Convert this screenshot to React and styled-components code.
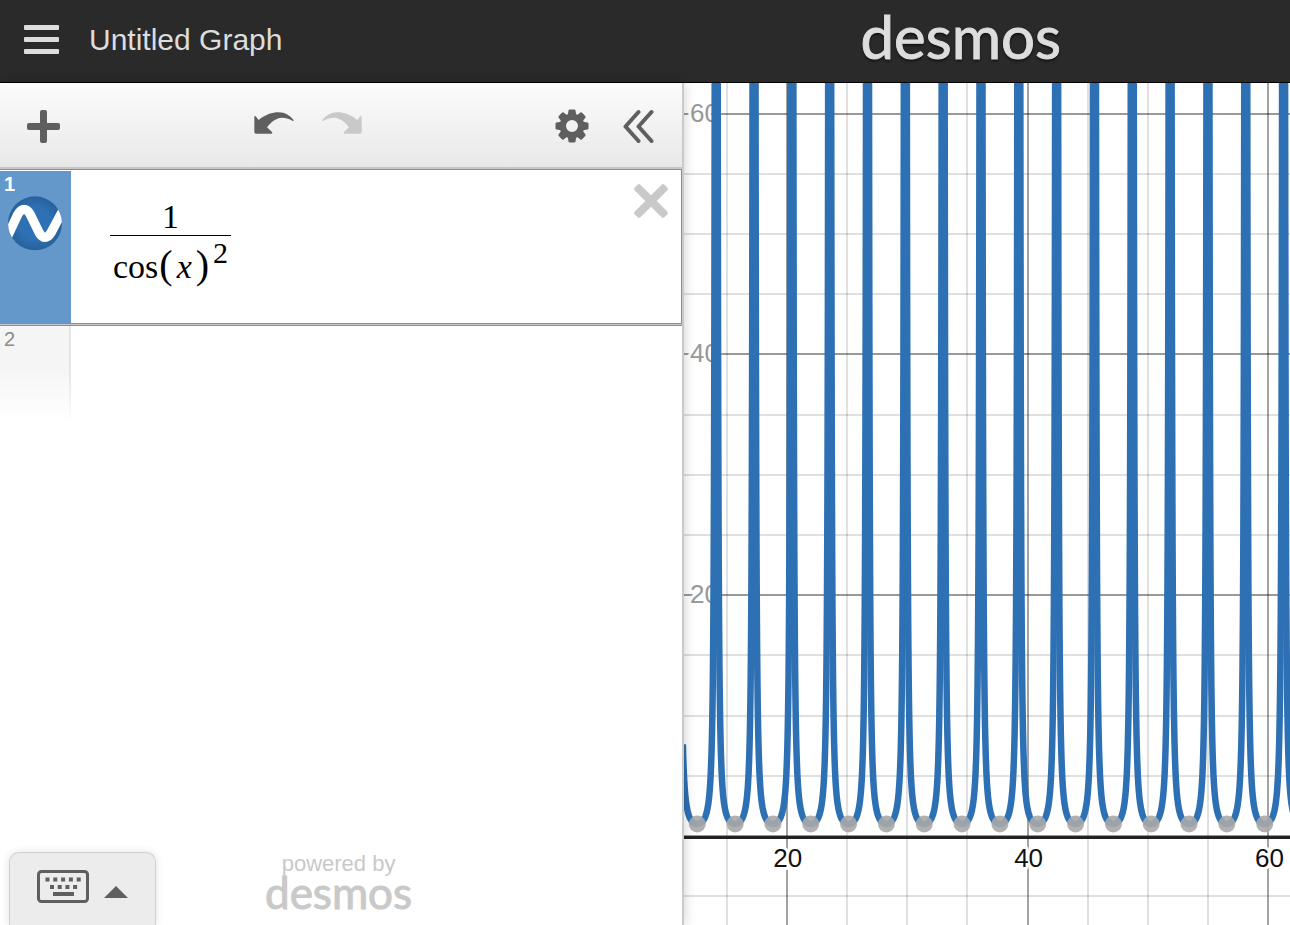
import styled, { createGlobalStyle, ThemeProvider } from "styled-components";

const theme = {
    colors: {
        header: "#2a2a2a",
        light: "#dddddd",
        icon: "#5f5f5f",
        muted: "#c9c9c9",
        selected: "#6498cb",
        curve: "#2d70b3"
    }
};

const GlobalStyle = createGlobalStyle`
    * {
        box-sizing: border-box;
    }

    body {
        margin: 0;
        background: #fff;
        font-family: "Liberation Sans", Arial, sans-serif;
    }
`;

const Page = styled.div`
    display: flex;
    flex-direction: column;
    height: 100vh;
    overflow: hidden;
`;

const Header = styled.header`
    display: flex;
    align-items: center;
    flex: none;
    height: 83px;
    padding: 0 229px 4px 24px;
    background: ${({ theme }) => theme.colors.header};
    border-bottom: 1px solid #000;
`;

const IconButton = styled.button`
    display: flex;
    align-items: center;
    justify-content: center;
    flex: none;
    padding: 0;
    border: 0;
    background: none;
    color: ${({ theme }) => theme.colors.icon};
    cursor: pointer;

    &:disabled {
        color: ${({ theme }) => theme.colors.muted};
        cursor: default;
    }
`;

const MenuButton = styled(IconButton)`
    flex-direction: column;
    gap: 7px;
    width: 35px;
`;

const MenuBar = styled.span`
    width: 100%;
    height: 5px;
    border-radius: 1px;
    background: ${({ theme }) => theme.colors.light};
`;

const Title = styled.h1`
    flex: 1;
    margin: 2px 0 0 30px;
    color: ${({ theme }) => theme.colors.light};
    font-size: 30px;
    font-weight: 400;
    line-height: 36px;
`;

const Logo = styled.span`
    margin-bottom: 6px;
    font-family: Lato, sans-serif;
    font-size: 60px;
    line-height: 72px;
    color: ${({ theme }) => theme.colors.light};
    -webkit-text-stroke: 1px ${({ theme }) => theme.colors.light};
    text-shadow: 0 2px 3px rgba(0, 0, 0, 0.7);
`;

const Workspace = styled.main`
    display: flex;
    flex: 1;
    min-height: 0;
`;

const Panel = styled.section`
    display: flex;
    flex-direction: column;
    flex: none;
    width: 684px;
    max-width: 60%;
    background: #fff;
    border-right: 2px solid #cacaca;
    box-shadow: 0 0 12px rgba(0, 0, 0, 0.2);
    z-index: 1;
`;

const Toolbar = styled.div`
    display: flex;
    align-items: center;
    justify-content: space-between;
    flex: none;
    height: 86px;
    padding: 2px 28px 0 27px;
    background: linear-gradient(#fcfcfc, #e8e8e8);
    border-bottom: 2px solid #c6c6c6;
`;

const ToolGroup = styled.div`
    display: flex;
    align-items: center;
    gap: ${({ $gap }) => $gap}px;
`;

const History = styled(ToolGroup)`
    margin-bottom: 6px;
`;

const List = styled.ol`
    flex: 1;
    margin: 0;
    padding: 0;
    list-style: none;
`;

const Expression = styled.li`
    display: flex;
    height: 155px;
    padding-top: 1px;
    border: 1px solid ${({ theme }) => theme.colors.selected};
    border-left: 0;
    box-shadow: 0 1px 0 #c6c6c6, 0 2px 0 ${({ theme }) => theme.colors.selected};
`;

const Tab = styled.div`
    display: flex;
    flex-direction: column;
    flex: none;
    width: 71px;
    padding: 2px 8px 0 4px;
    background: ${({ theme }) => theme.colors.selected};
    color: #fff;
    font-size: 20px;
    font-weight: 700;
    line-height: 23px;
`;

const EmptyTab = styled(Tab)`
    height: 96px;
    background: linear-gradient(#f5f5f5 40%, #fff);
    color: #8c8c8c;
    font-weight: 400;
    border-right: 2px solid;
    border-image: linear-gradient(#e6e6e6 50%, #fff) 1;
`;

const EmptyExpression = styled.li`
    display: flex;
    margin-top: 2px;
`;

const CurveButton = styled(IconButton)`
    width: 54px;
    margin-left: 4px;
`;

const Formula = styled.div`
    display: flex;
    flex: 1;
    align-items: flex-start;
    padding: 28px 0 0 39px;
    font-family: "Liberation Serif", serif;
    font-size: 34px;
    color: #000;
    outline: none;
`;

const Fraction = styled.div`
    display: flex;
    flex-direction: column;
    align-items: center;
`;

const Numerator = styled.div`
    width: 100%;
    text-align: center;
    line-height: 36px;
    border-bottom: 1px solid #000;
`;

const Denominator = styled.div`
    display: flex;
    align-items: baseline;
    padding: 0 3px;
    line-height: 58px;
`;

const Paren = styled.span`
    margin: 0 1px;
    font-size: 40px;
`;

const Variable = styled.i`
    padding: 0 3px;
`;

const Power = styled.sup`
    align-self: flex-start;
    margin-left: 3px;
    font-size: 30px;
    line-height: 34px;
`;

const DeleteButton = styled(IconButton)`
    align-self: flex-start;
    margin: 12px 12px 0 0;
    color: ${({ theme }) => theme.colors.muted};
`;

const PanelFooter = styled.footer`
    display: flex;
    flex: none;
    gap: 109px;
    padding-left: 9px;
`;

const KeypadButton = styled(IconButton)`
    gap: 15px;
    width: 147px;
    height: 73px;
    padding: 0 0 4px;
    background: #ececec;
    border: 1px solid #d0d0d0;
    border-bottom: 0;
    border-radius: 10px 10px 0 0;
    box-shadow: 0 0 8px rgba(0, 0, 0, 0.12);
`;

const Arrow = styled.span`
    margin-top: 9px;
    border: 12px solid transparent;
    border-top: 0;
    border-bottom: 12px solid ${({ theme }) => theme.colors.icon};
`;

const PoweredBy = styled.a`
    display: flex;
    flex-direction: column;
    align-items: center;
    color: ${({ theme }) => theme.colors.muted};
    font-size: 22px;
    line-height: 24px;
    text-decoration: none;
`;

const SmallLogo = styled.span`
    font-family: Lato, sans-serif;
    font-size: 44px;
    line-height: 32px;
    -webkit-text-stroke: 1px ${({ theme }) => theme.colors.muted};
`;

const GraphPane = styled.section`
    flex: 1;
    min-width: 0;
    overflow: hidden;
`;

const GraphSvg = styled.svg`
    display: block;
    width: 100%;
    height: 100%;
    font-size: 26px;
`;

const AxisLabel = styled.text`
    fill: ${({ $muted }) => ($muted ? "#999" : "#111")};
    stroke: #fff;
    stroke-width: 6px;
    stroke-linejoin: round;
    paint-order: stroke;
`;

const UNIT = 12.04;
const toX = (x) => -138 + x * UNIT;
const toY = (y) => 753 - y * UNIT;

const range = (from, to, step = 1) => {
    const values = [];
    for (let v = from; v <= to; v += step) values.push(v);
    return values;
};

// one branch of 1 / cos(x)^2 around x = k * pi
const branch = (k, from = -1.48) =>
    range(from, 1.48, 0.01)
        .map((t) => `${toX(k * Math.PI + t).toFixed(2)},${toY(1 / Math.cos(t) ** 2).toFixed(2)}`)
        .join(" ");

const Icon = ({ width, height, children, ...rest }) => (
    <svg width={width} height={height} viewBox={`0 0 ${width} ${height}`} aria-hidden="true" {...rest}>
        {children}
    </svg>
);

const ArrowIcon = ({ flip }) => (
    <svg width="40" height="22" viewBox="0 0 120 66" aria-hidden="true">
        <path
            transform={flip ? "translate(120 0) scale(-1 1)" : undefined}
            fill="currentColor"
            d="M5 13 L14 24 C34 8 54 1 74 1 C93 1 109 11 119 25 Q119 29 115 26 C104 19 94 17 84 17 C64 18 51 31 39 46 L54 60 Q57 65 51 65 L6 65 Q1 65 1 60 L1 15 Q1 10 5 13Z"
        />
    </svg>
);

const GearIcon = () => (
    <svg width="34" height="34" viewBox="-17 -17 34 34" aria-hidden="true">
        <circle r="9.2" fill="none" stroke="currentColor" strokeWidth="6.4" />
        {range(0, 315, 45).map((angle) => (
            <path
                key={angle}
                transform={`rotate(${angle})`}
                fill="currentColor"
                d="M-4.2 -11 L-3.5 -15.5 Q-3.2 -16.5 -2.2 -16.5 L2.2 -16.5 Q3.2 -16.5 3.5 -15.5 L4.2 -11Z"
            />
        ))}
    </svg>
);

const KeyboardIcon = () => (
    <Icon width={52} height={34}>
        <rect x="1.5" y="1.5" width="49" height="30" rx="3" fill="none" stroke="currentColor" strokeWidth="3" />
        {range(0, 4).map((i) => (
            <rect key={i} x={8.5 + i * 7.8} y="7.5" width="4" height="4" fill="currentColor" />
        ))}
        {range(0, 3).map((i) => (
            <rect key={i} x={13 + i * 7.7} y="15" width="4" height="4" fill="currentColor" />
        ))}
        <rect x="16" y="22" width="21" height="4" fill="currentColor" />
    </Icon>
);

const CurveIcon = () => (
    <svg width="54" height="55" viewBox="0 0 162 165" aria-hidden="true">
        <defs>
            <radialGradient id="disc">
                <stop offset="60%" stopColor="#2d70b3" />
                <stop offset="100%" stopColor="#27619b" />
            </radialGradient>
            <clipPath id="discClip">
                <circle cx="81" cy="82" r="81" />
            </clipPath>
        </defs>
        <circle cx="81" cy="82" r="81" fill="url(#disc)" />
        <path
            clipPath="url(#discClip)"
            d="M-8 135 L29 56 Q38 40 48 40 Q58 40 66 54 L94 111 Q102 124 111 124 Q121 124 129 110 L170 34"
            fill="none"
            stroke="#fff"
            strokeWidth="28"
        />
    </svg>
);

const CloseIcon = () => (
    <svg width="36" height="36" viewBox="-18 -18 36 36" aria-hidden="true">
        {[45, -45].map((angle) => (
            <rect
                key={angle}
                transform={`rotate(${angle})`}
                x="-21"
                y="-4"
                width="42"
                height="8"
                rx="2"
                fill="currentColor"
            />
        ))}
    </svg>
);

function Graph() {
    const gridX = range(-20, 300, 5);
    const gridY = range(-120, 60, 5);

    return (
        <GraphPane aria-label="Graph">
            <GraphSvg>
                {gridX.map((v) => (
                    <rect
                        key={v}
                        x={Math.round(toX(v)) - 1}
                        y="0"
                        width="2"
                        height="100%"
                        fillOpacity={v % 20 === 0 ? 0.36 : 0.12}
                    />
                ))}
                {gridY.map((v) => (
                    <rect
                        key={v}
                        x="0"
                        y={Math.round(toY(v)) - 1}
                        width="100%"
                        height="2"
                        fillOpacity={v % 20 === 0 ? 0.4 : 0.12}
                    />
                ))}
                <rect x="0" y="753" width="100%" height="3" fill="#222" />
                {[20, 40, 60].map((v) => (
                    <AxisLabel key={v} x={toX(v) + 1} y="784" textAnchor="middle">
                        {v}
                    </AxisLabel>
                ))}
                {[20, 40, 60].map((v) => (
                    <AxisLabel key={v} x="6" y={toY(v) + 8} $muted>
                        {v}
                    </AxisLabel>
                ))}
                <g fill="none" stroke={theme.colors.curve} strokeWidth="6.5" strokeLinejoin="round">
                    <polyline points={branch(4, -1.2)} />
                    {range(5, 80).map((k) => (
                        <polyline key={k} points={branch(k)} />
                    ))}
                </g>
                {range(4, 80).map((k) => (
                    <circle key={k} cx={toX(k * Math.PI)} cy={toY(1)} r="8.5" fill="#a8a8a8" fillOpacity="0.9" />
                ))}
            </GraphSvg>
        </GraphPane>
    );
}

export default function App() {
    return (
        <ThemeProvider theme={theme}>
            <GlobalStyle />
            <Page>
                <Header>
                    <MenuButton aria-label="Menu">
                        <MenuBar />
                        <MenuBar />
                        <MenuBar />
                    </MenuButton>
                    <Title>Untitled Graph</Title>
                    <Logo>desmos</Logo>
                </Header>
                <Workspace>
                    <Panel>
                        <Toolbar>
                            <IconButton aria-label="Add item">
                                <Icon width={33} height={33}>
                                    <rect x="13" y="0" width="7" height="33" rx="2" fill="currentColor" />
                                    <rect x="0" y="13" width="33" height="7" rx="2" fill="currentColor" />
                                </Icon>
                            </IconButton>
                            <History $gap={28}>
                                <IconButton aria-label="Undo">
                                    <ArrowIcon />
                                </IconButton>
                                <IconButton aria-label="Redo" disabled>
                                    <ArrowIcon flip />
                                </IconButton>
                            </History>
                            <ToolGroup $gap={34}>
                                <IconButton aria-label="Graph settings">
                                    <GearIcon />
                                </IconButton>
                                <IconButton aria-label="Hide expression list">
                                    <Icon width={31} height={34}>
                                        <g
                                            fill="none"
                                            stroke="currentColor"
                                            strokeWidth="4"
                                            strokeLinecap="round"
                                            strokeLinejoin="round"
                                        >
                                            <path d="M15.5 3 L2.5 17.5 L15.5 32" />
                                            <path d="M28.5 3 L15.5 17.5 L28.5 32" />
                                        </g>
                                    </Icon>
                                </IconButton>
                            </ToolGroup>
                        </Toolbar>
                        <List>
                            <Expression>
                                <Tab>
                                    1
                                    <CurveButton aria-label="Hide curve">
                                        <CurveIcon />
                                    </CurveButton>
                                </Tab>
                                <Formula role="textbox" aria-label="Expression 1" tabIndex={0}>
                                    <Fraction>
                                        <Numerator>1</Numerator>
                                        <Denominator>
                                            cos
                                            <Paren>(</Paren>
                                            <Variable>x</Variable>
                                            <Paren>)</Paren>
                                            <Power>2</Power>
                                        </Denominator>
                                    </Fraction>
                                </Formula>
                                <DeleteButton aria-label="Delete expression">
                                    <CloseIcon />
                                </DeleteButton>
                            </Expression>
                            <EmptyExpression>
                                <EmptyTab>2</EmptyTab>
                            </EmptyExpression>
                        </List>
                        <PanelFooter>
                            <KeypadButton aria-label="Show keypad">
                                <KeyboardIcon />
                                <Arrow />
                            </KeypadButton>
                            <PoweredBy href="#">
                                powered by
                                <SmallLogo>desmos</SmallLogo>
                            </PoweredBy>
                        </PanelFooter>
                    </Panel>
                    <Graph />
                </Workspace>
            </Page>
        </ThemeProvider>
    );
}
